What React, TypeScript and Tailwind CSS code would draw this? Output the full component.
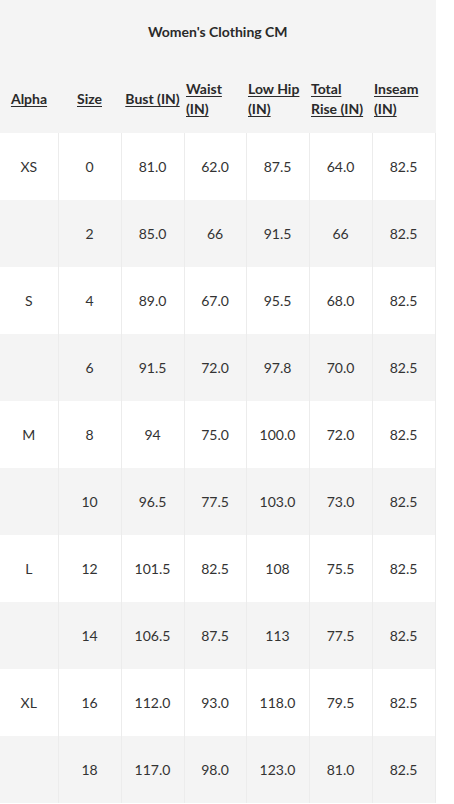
const headers = [
  { lines: ["Alpha"], width: "w-[58px]" },
  { lines: ["Size"], width: "w-[63px]" },
  { lines: ["Bust (IN)"], width: "w-[63px]" },
  { lines: ["Waist", "(IN)"], width: "w-[62px]" },
  { lines: ["Low Hip", "(IN)"], width: "w-[63px]" },
  { lines: ["Total", "Rise (IN)"], width: "w-[63px]" },
  { lines: ["Inseam", "(IN)"], width: "w-[63px]" },
];

const rows: string[][] = [
  ["XS", "0", "81.0", "62.0", "87.5", "64.0", "82.5"],
  ["", "2", "85.0", "66", "91.5", "66", "82.5"],
  ["S", "4", "89.0", "67.0", "95.5", "68.0", "82.5"],
  ["", "6", "91.5", "72.0", "97.8", "70.0", "82.5"],
  ["M", "8", "94", "75.0", "100.0", "72.0", "82.5"],
  ["", "10", "96.5", "77.5", "103.0", "73.0", "82.5"],
  ["L", "12", "101.5", "82.5", "108", "75.5", "82.5"],
  ["", "14", "106.5", "87.5", "113", "77.5", "82.5"],
  ["XL", "16", "112.0", "93.0", "118.0", "79.5", "82.5"],
  ["", "18", "117.0", "98.0", "123.0", "81.0", "82.5"],
];

export default function App() {
  return (
    <div className="min-h-screen bg-white font-['Lato',sans-serif] text-[14px] text-[#333]">
      <table className="w-[435px] table-fixed border-collapse bg-[#f4f4f4]">
        <caption className="h-[65px] bg-[#f4f4f4] pt-[22px] text-center text-[14px] font-bold leading-5 text-[#2a2a2a]">
          Women's Clothing CM
        </caption>
        <colgroup>
          {headers.map((h) => (
            <col key={h.lines.join(" ")} className={h.width} />
          ))}
        </colgroup>
        <thead>
          <tr className="h-[68px]">
            {headers.map((h) => (
              <th
                key={h.lines.join(" ")}
                className={
                  h.lines.length > 1
                    ? "p-0 pl-[2px] text-left align-middle font-bold leading-5 text-[#2a2a2a]"
                    : "p-0 text-center align-middle font-bold leading-5 text-[#2a2a2a]"
                }
              >
                {h.lines.map((line) => (
                  <span key={line} className="block whitespace-nowrap underline underline-offset-2">
                    {line}
                  </span>
                ))}
              </th>
            ))}
          </tr>
        </thead>
        <tbody>
          {rows.map((row, i) => (
            <tr key={i} className={i % 2 === 0 ? "h-[67px] bg-white" : "h-[67px] bg-[#f4f4f4]"}>
              {row.map((cell, j) => (
                <td key={j} className="border-r border-[#ececec] p-0 text-center align-middle">
                  {cell}
                </td>
              ))}
            </tr>
          ))}
        </tbody>
      </table>
    </div>
  );
}
